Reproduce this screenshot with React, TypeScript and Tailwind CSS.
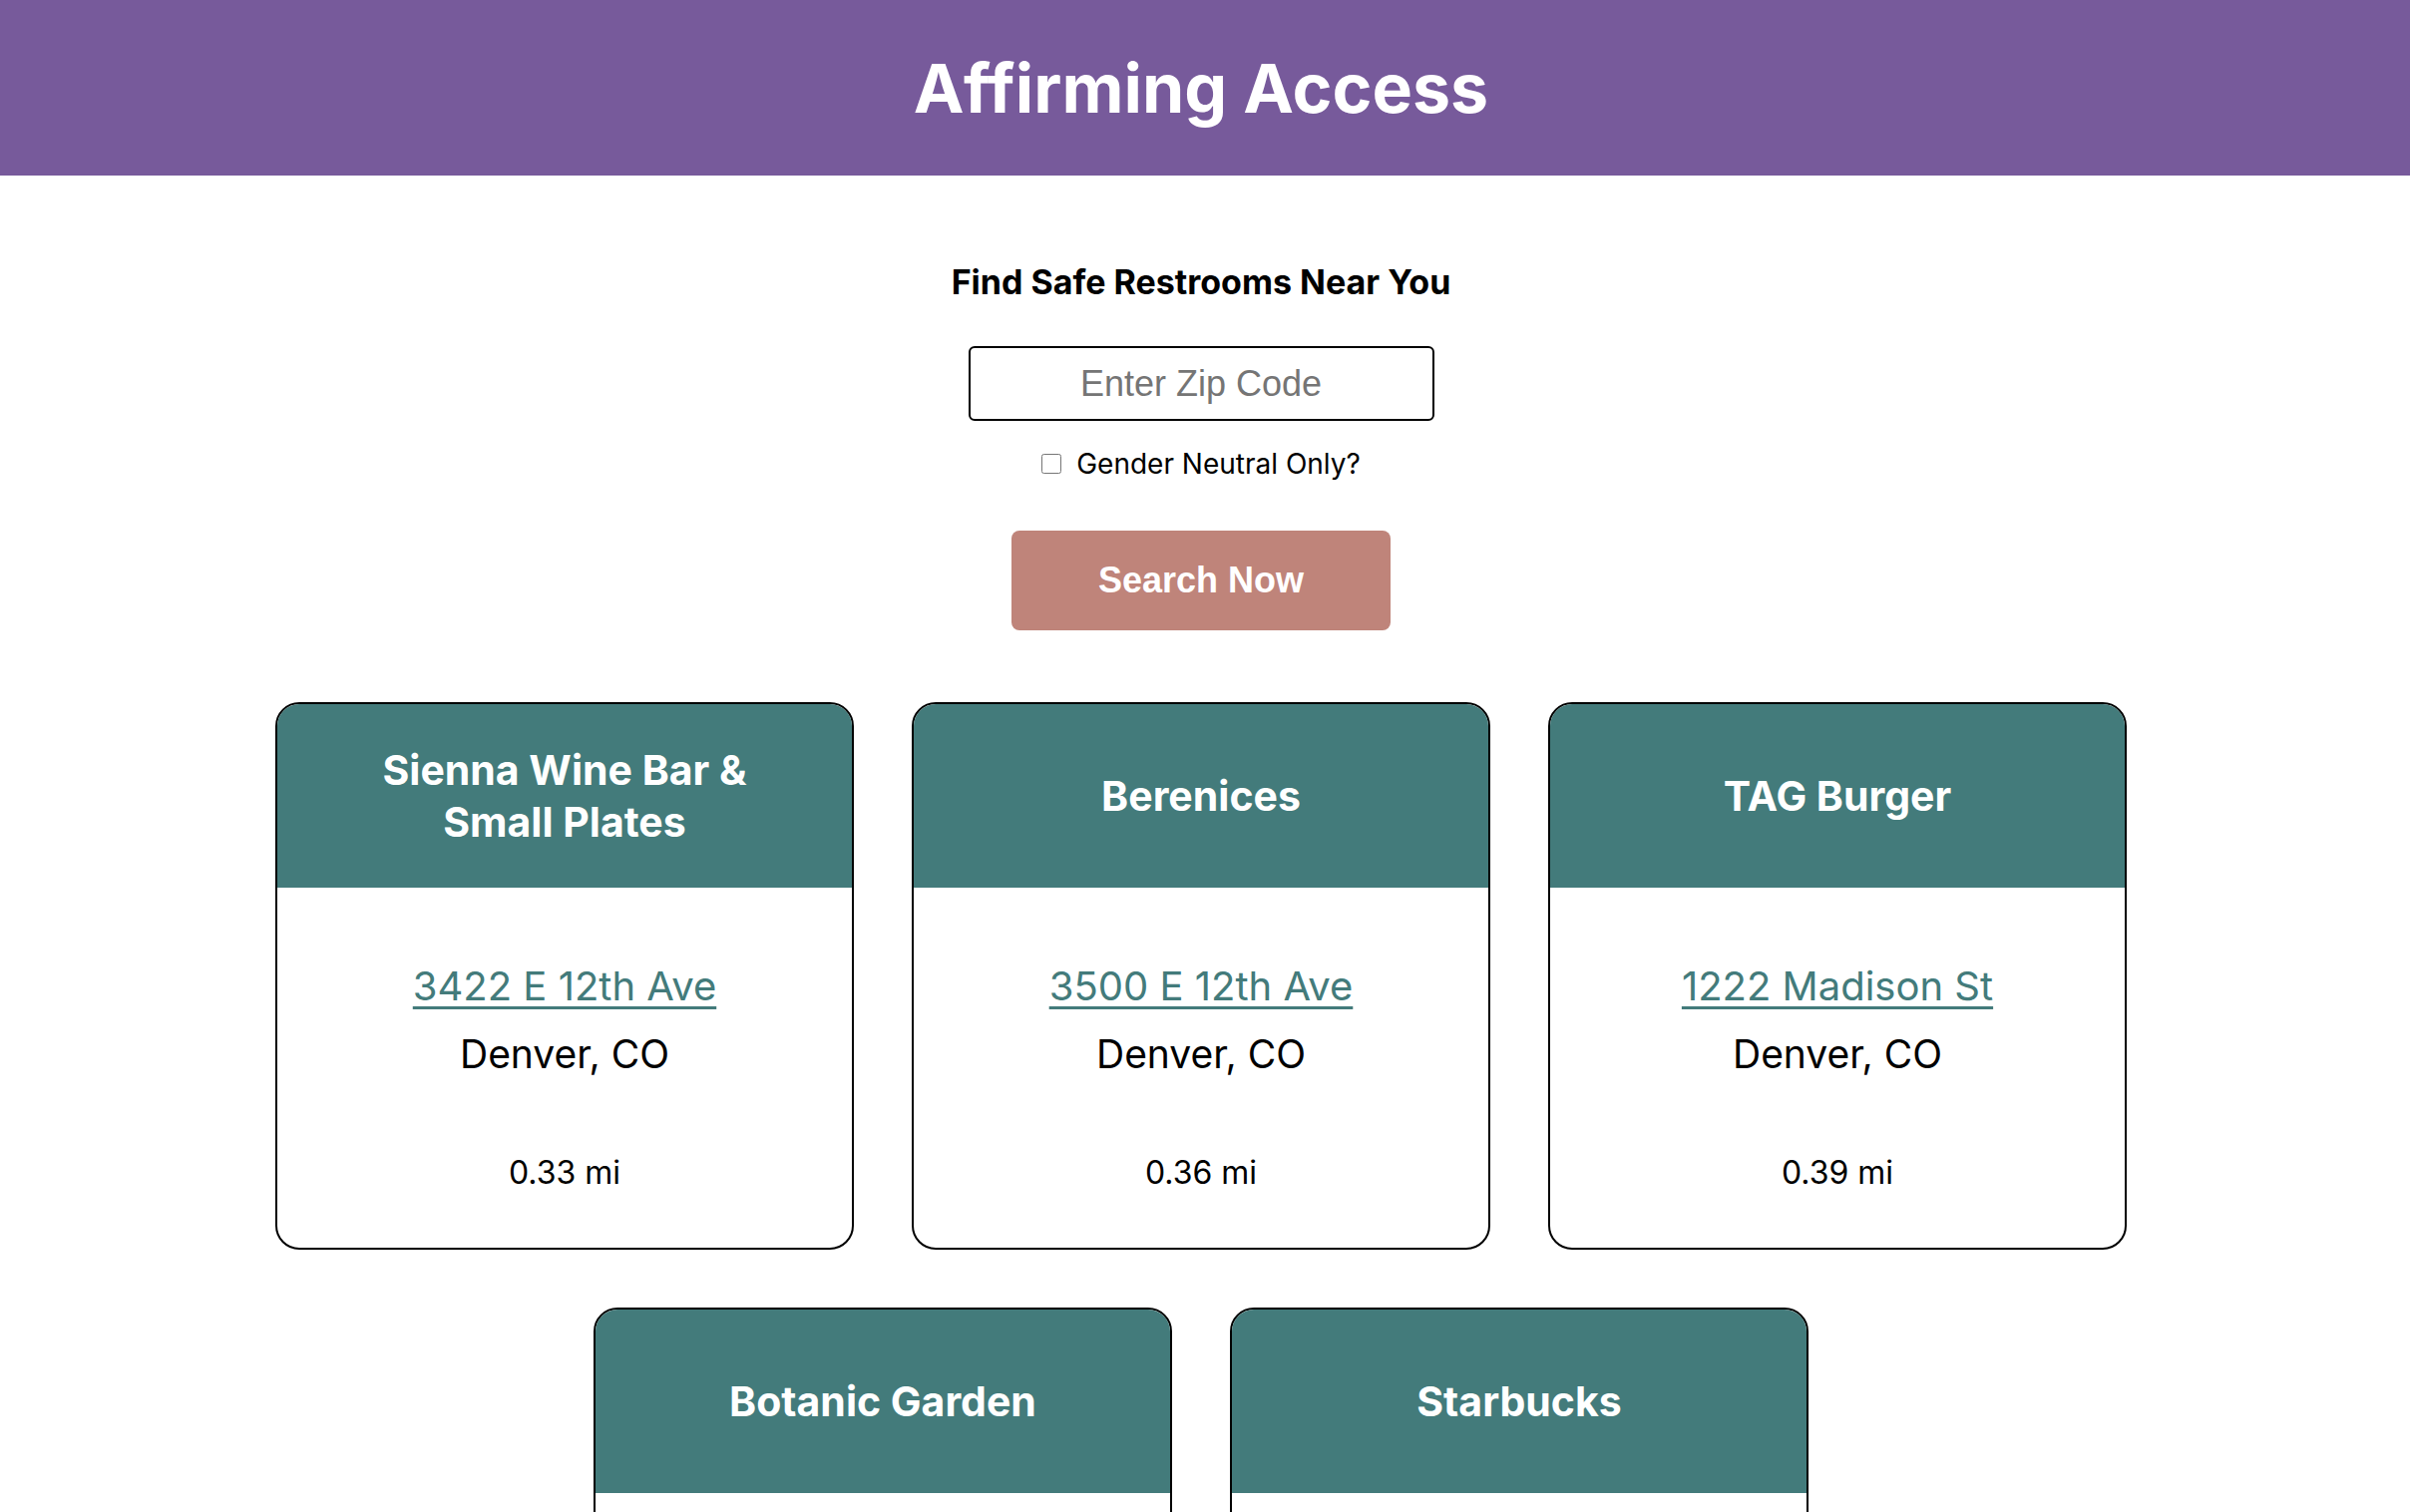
const restrooms = [
  { id: 1, name: 'Sienna Wine Bar & Small Plates', street: '3422 E 12th Ave', city: 'Denver, CO', distance: '0.33 mi' },
  { id: 2, name: 'Berenices', street: '3500 E 12th Ave', city: 'Denver, CO', distance: '0.36 mi' },
  { id: 3, name: 'TAG Burger', street: '1222 Madison St', city: 'Denver, CO', distance: '0.39 mi' },
  { id: 4, name: 'Botanic Garden', street: '1007 York St', city: 'Denver, CO', distance: '0.52 mi' },
  { id: 5, name: 'Starbucks', street: '1200 E 13th Ave', city: 'Denver, CO', distance: '0.58 mi' },
];

function RestroomCard({ name, street, city, distance }: { name: string; street: string; city: string; distance: string }) {
  return (
    <div className="w-[580px] border-2 border-black rounded-[24px] overflow-hidden bg-white">
      {/* Card header */}
      <div className="h-[184px] bg-[#437b7b] flex items-center justify-center px-[60px]">
        <h3 className="text-white text-[41px] font-bold leading-[52px] text-center">{name}</h3>
      </div>

      {/* Card body */}
      <div className="flex flex-col items-center pt-[75px] pb-[55px] text-center">
        <a
          href="#"
          className="text-[40px] leading-[48px] text-[#437b7b] underline decoration-[3px] underline-offset-[6px]"
        >
          {street}
        </a>
        <p className="mt-[20px] text-[39px] leading-[48px] text-black">{city}</p>
        <p className="mt-[75px] text-[32px] leading-[40px] text-black">{distance}</p>
      </div>
    </div>
  );
}

export default function App() {
  return (
    <div className="min-h-screen bg-white font-['Inter',sans-serif] text-black">
      <header className="h-[176px] bg-[#775a9b] flex items-center justify-center pr-[8px]">
        <h1 className="text-white text-[68px] font-bold leading-none">Affirming Access</h1>
      </header>

      <main className="flex flex-col items-center pr-[8px] pb-[80px]">
        <h2 className="mt-[87px] text-[34px] font-bold leading-[40px]">Find Safe Restrooms Near You</h2>

        <input
          type="text"
          placeholder="Enter Zip Code"
          className="mt-[44px] w-[467px] h-[75px] border-2 border-black rounded-[6px] text-center text-[36px] font-['Liberation_Sans',Arial,sans-serif] placeholder:text-[#757575] outline-none"
        />

        <label className="mt-[23px] h-[40px] flex items-center gap-[15px]">
          <input type="checkbox" className="w-[20px] h-[20px] m-0" />
          <span className="text-[28px]">Gender Neutral Only?</span>
        </label>

        <button className="mt-[47px] w-[380px] h-[100px] bg-[#bf847a] rounded-[8px] text-white text-[36px] font-bold font-['Liberation_Sans',Arial,sans-serif]">
          Search Now
        </button>

        {/* Results */}
        <div className="mt-[72px] w-[1856px] flex flex-wrap justify-center gap-[58px]">
          {restrooms.map((r) => (
            <RestroomCard key={r.id} name={r.name} street={r.street} city={r.city} distance={r.distance} />
          ))}
        </div>
      </main>
    </div>
  );
}
